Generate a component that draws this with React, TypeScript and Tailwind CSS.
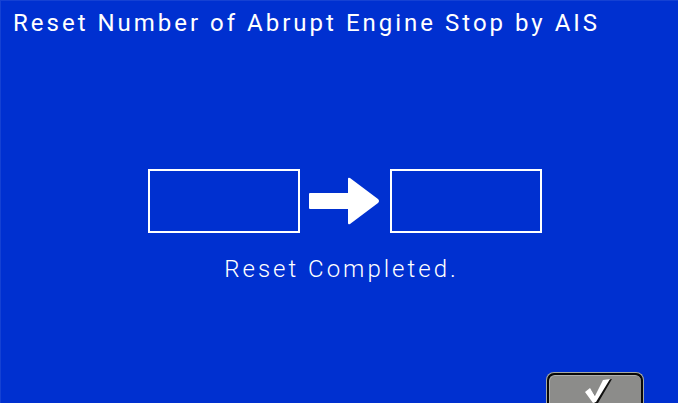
export default function App() {
  return (
    <main className="flex h-screen flex-col items-center overflow-hidden border-l border-t border-[#1541d3] bg-[#0030d0] font-['Roboto','Liberation_Sans',sans-serif] text-white">
      <h1 className="w-full whitespace-nowrap pl-3 pt-1.5 text-2xl leading-8 tracking-[3px]">
        Reset Number of Abrupt Engine Stop by AIS
      </h1>
      <section className="mt-[130px] flex flex-col items-center">
        <div className="flex items-center gap-2 pl-2.5">
          <output aria-label="Value before reset" className="h-16 w-38 border-2 border-white" />
          <svg aria-hidden="true" width="74" height="48" viewBox="0 0 74 48" fill="white">
            <path d="M2 16H40V2Q40 0 42 1L70 22Q72 24 70 26L42 47Q40 48 40 46V32H2Q1 32 1 31V17Q1 16 2 16Z" />
          </svg>
          <output aria-label="Value after reset" className="h-16 w-38 border-2 border-white" />
        </div>
        <p role="status" className="mt-5 pl-1 text-2xl font-light leading-8 tracking-[3px]">
          Reset Completed.
        </p>
      </section>
      <div className="mt-auto flex w-full justify-end pr-[34px]">
        <button
          type="button"
          aria-label="Confirm"
          className="flex h-[31px] w-[98px] justify-center rounded-t-lg border border-b-0 border-[#a8aaa0] bg-[#080808] px-0.5 pt-0.5"
        >
          <span className="flex h-full w-full justify-center rounded-t-md border-t border-l border-[#b0b0ae] bg-[#8c8c8a] pl-1">
            <svg aria-hidden="true" width="32" height="28" viewBox="0 0 32 28">
              <path d="M6 17L9 14L14 21L25 4L30 3L16 27H13Z" fill="#111" />
              <path d="M3 16L8 12L13 20L21 4L28 3L14 26L11 27Z" fill="white" />
            </svg>
          </span>
        </button>
      </div>
    </main>
  );
}
